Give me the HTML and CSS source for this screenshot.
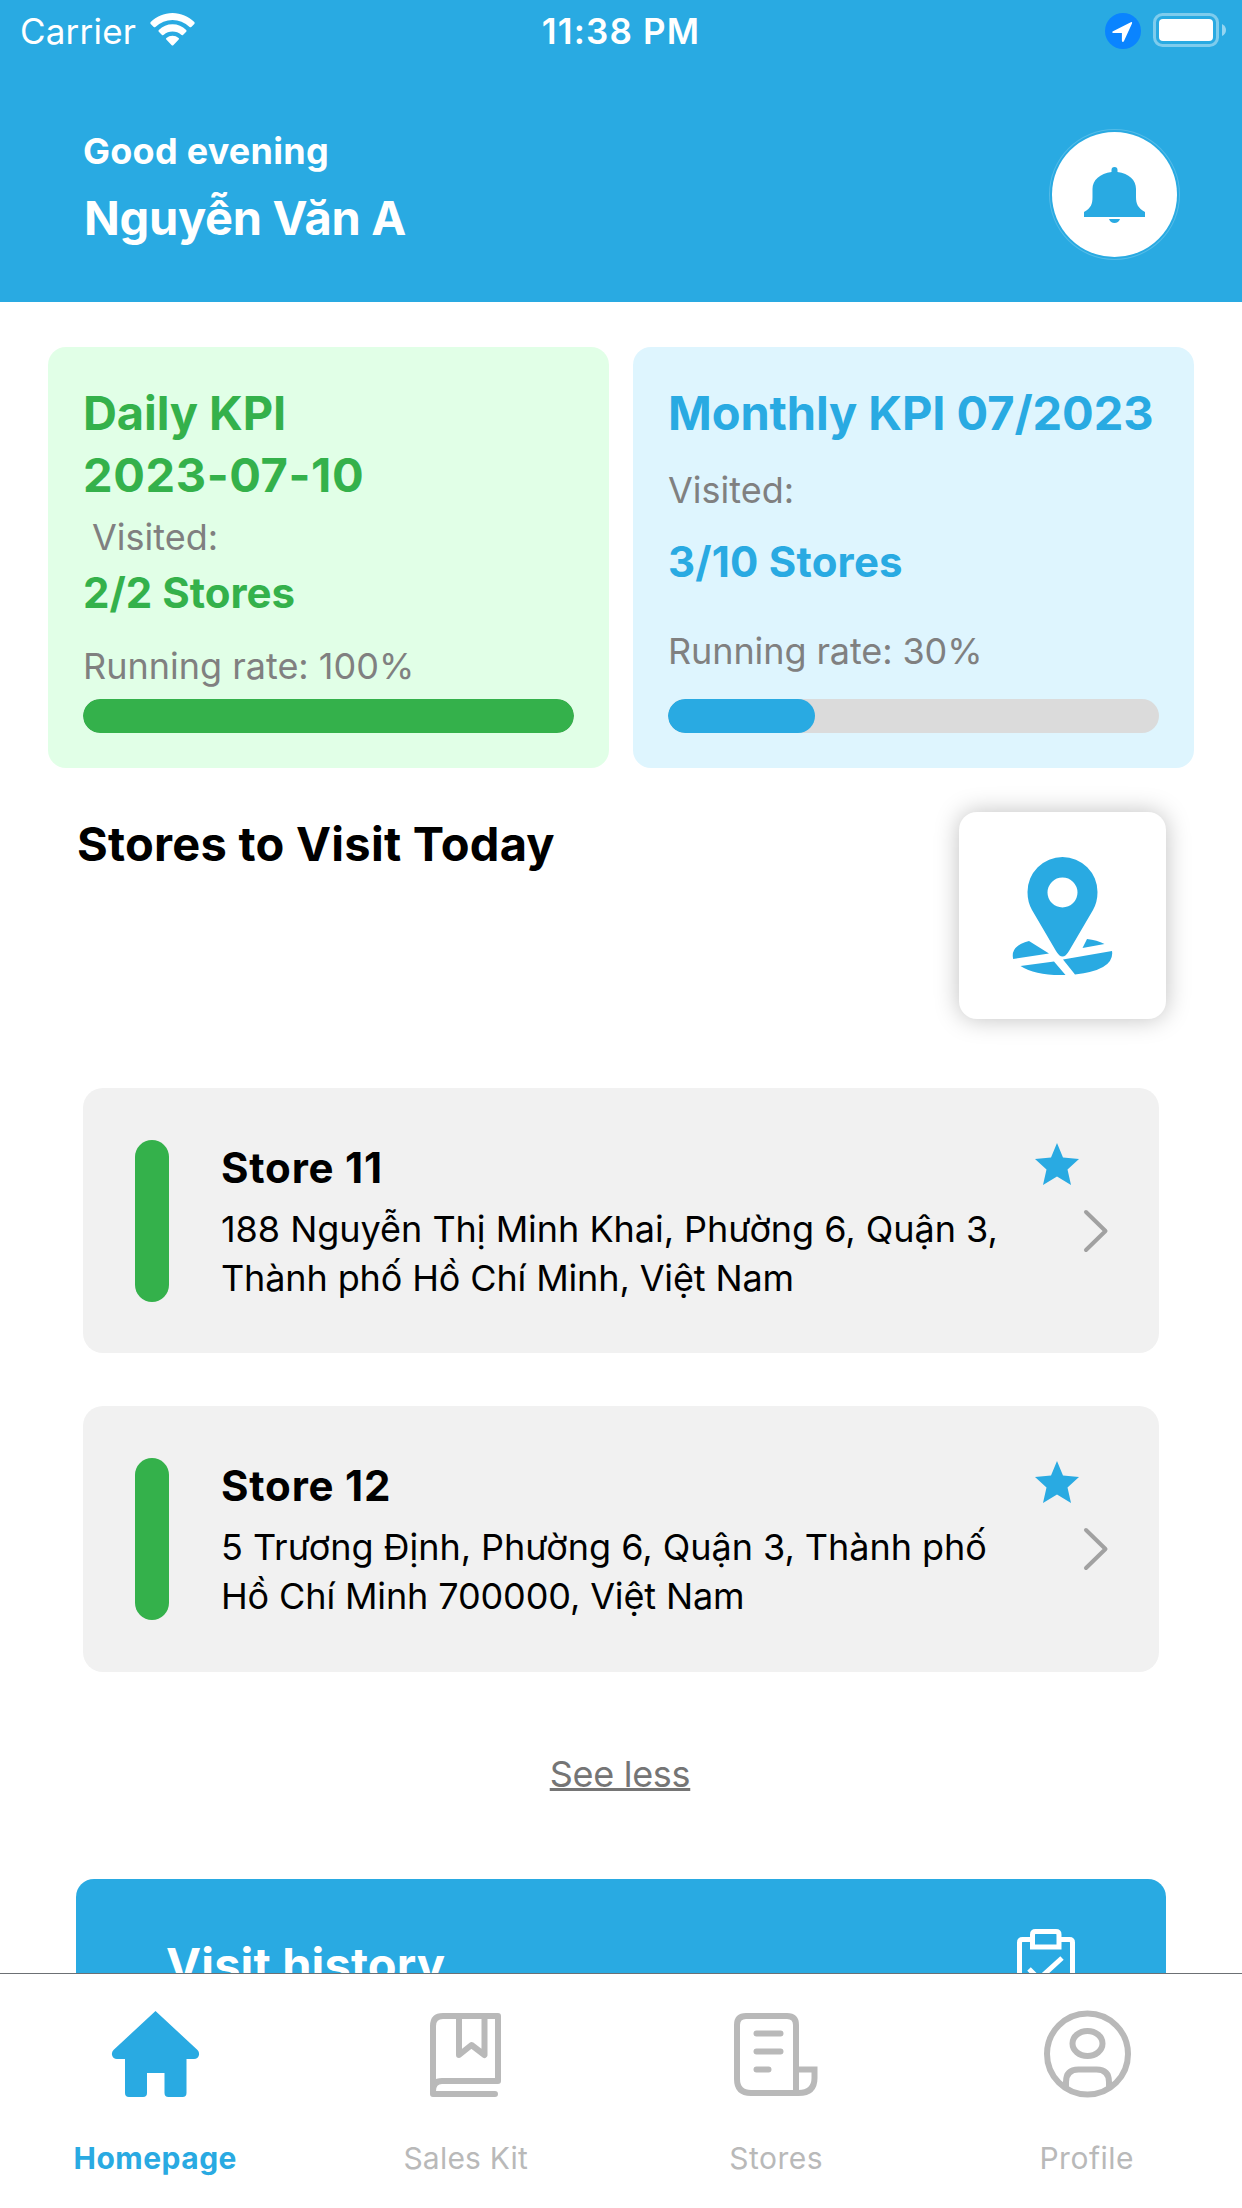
FILE: index.html
```html
<!DOCTYPE html>
<html lang="vi">
<head>
<meta charset="utf-8">
<title>Homepage</title>
<link rel="stylesheet" href="styles.css">
</head>
<body>
<div class="screen">
  <header class="header">
    <div class="status">
      <div class="status-left">
        <span class="carrier">Carrier</span>
        <svg class="wifi" viewBox="0 0 45 33" fill="#fff"><path d="M22.500 0C31 0 38.500 3.500 44.300 9.100Q45.200 10 44.300 11L41.300 14Q40.500 14.700 39.600 14Q32 7 22.500 7Q13 7 5.400 14Q4.500 14.700 3.700 14L.7 11Q-.2 10 .7 9.100C6.500 3.500 14 0 22.500 0Z"/><path d="M22.500 11.200Q30.400 11.200 36.200 17Q37 17.900 36.200 18.800L33 21.900Q32.100 22.600 31.200 21.800Q27.500 18.500 22.500 18.500Q17.500 18.500 13.800 21.800Q12.900 22.600 12 21.900L8.800 18.800Q8 17.900 8.800 17Q14.600 11.200 22.500 11.200Z"/><path d="M22.500 22.800Q26 22.800 28.600 24.900Q29.500 25.700 28.700 26.500L23.300 32.200Q22.500 33 21.700 32.200L16.300 26.500Q15.500 25.700 16.400 24.900Q19 22.800 22.500 22.800Z"/></svg>
      </div>
      <span class="time">11:38 PM</span>
      <div class="status-right">
        <svg class="location" viewBox="0 0 36 36"><circle cx="18" cy="18" r="18" fill="#0a84ff"/><path d="M25.800 9.200Q27.600 8.600 27 10.500L19 28Q18.400 29.200 17.500 28.800Q16.900 28.600 16.900 27.800V20H8.300Q7.300 20 7.200 19.200Q7.100 18.600 8 18.200Z" fill="#fff"/></svg>
        <svg class="battery" viewBox="0 0 73 34"><rect x="1.500" y="1.500" width="63" height="31" rx="8" fill="none" stroke="#fff" stroke-opacity=".4" stroke-width="3"/><rect x="6" y="6" width="54" height="22" rx="4" fill="#fff"/><path d="M69 11Q73 13 73 17T69 23Z" fill="#fff" fill-opacity=".5"/></svg>
      </div>
    </div>
    <div class="greeting-row">
      <div class="greeting">
        <p class="hello">Good evening</p>
        <p class="name">Nguyễn Văn A</p>
      </div>
      <div class="bell-button">
        <svg class="bell" viewBox="0 0 61 56" fill="#29aae2"><path d="M27.500 5V3Q27.500 0 30.500 0T33.500 3V5C45 6.500 52 13 52 22V30C52 37 54 41 61 45V50H0V45C7 41 8.500 37 8.500 30V22C8.500 13 16 6.500 27.500 5Z"/><path d="M25 52H36Q34.500 56 30.500 56T25 52Z"/></svg>
      </div>
    </div>
  </header>

  <main class="content">
    <section class="kpis">
      <article class="kpi kpi-daily">
        <h2 class="kpi-title">Daily KPI<br><span class="date">2023-07-10</span></h2>
        <p class="kpi-label indent">Visited:</p>
        <p class="kpi-value">2/2 Stores</p>
        <p class="kpi-label rate">Running rate: 100%</p>
        <div class="track"><div class="fill" style="width:100%"></div></div>
      </article>
      <article class="kpi kpi-monthly">
        <h2 class="kpi-title">Monthly KPI 07/2023</h2>
        <p class="kpi-label">Visited:</p>
        <p class="kpi-value">3/10 Stores</p>
        <p class="kpi-label rate">Running rate: 30%</p>
        <div class="track"><div class="fill" style="width:30%"></div></div>
      </article>
    </section>

    <section class="visit-head">
      <h2 class="section-title">Stores to Visit Today</h2>
      <div class="map-button">
        <svg class="map" viewBox="0 0 101 119" fill="#29aae2"><path fill-rule="evenodd" d="M50.500 0A35 35 0 0 1 85.500 35Q85.500 45 81 53L57 94Q50.500 105 44 94L20 53Q15.500 45 15.500 35A35 35 0 0 1 50.500 0ZM50.500 20.500A15 15 0 1 0 50.500 50.500A15 15 0 1 0 50.500 20.500Z"/><path d="M17 84L37 96.500L1.200 102Q-2 89 17 84ZM75 82Q85 83 92.500 87L70.500 91ZM51 102.500L100 94Q103 113 63 117.500ZM8.500 109L42 104.500L53.500 118Q24 119 8.500 109Z"/></svg>
      </div>
    </section>

    <section class="stores">
      <article class="store">
        <div class="marker"></div>
        <div class="store-text">
          <h3 class="store-name">Store 11</h3>
          <p class="address">188 Nguyễn Thị Minh Khai, Phường 6, Quận 3,<br><span class="address-city">Thành phố Hồ Chí Minh, Việt Nam</span></p>
        </div>
        <div class="store-icons">
          <svg class="star" viewBox="0 0 44 42" fill="#29aae2"><path d="M22 0L28 14.500L44 16L32.500 26.500L36 42L22 33.500L8 42L11.500 26.500L0 16L16 14.500Z"/></svg>
          <svg class="chevron" viewBox="0 0 24 42"><path d="M2 2L21.500 21L2 40" fill="none" stroke="#a1a1a1" stroke-width="4" stroke-linecap="round" stroke-linejoin="round"/></svg>
        </div>
      </article>
      <article class="store">
        <div class="marker"></div>
        <div class="store-text">
          <h3 class="store-name">Store 12</h3>
          <p class="address">5 Trương Định, Phường 6, Quận 3, Thành phố<br><span class="address-city">Hồ Chí Minh 700000, Việt Nam</span></p>
        </div>
        <div class="store-icons">
          <svg class="star" viewBox="0 0 44 42" fill="#29aae2"><path d="M22 0L28 14.500L44 16L32.500 26.500L36 42L22 33.500L8 42L11.500 26.500L0 16L16 14.500Z"/></svg>
          <svg class="chevron" viewBox="0 0 24 42"><path d="M2 2L21.500 21L2 40" fill="none" stroke="#a1a1a1" stroke-width="4" stroke-linecap="round" stroke-linejoin="round"/></svg>
        </div>
      </article>
    </section>

    <a class="see-less">See less</a>

    <section class="history">
      <h2 class="history-title">Visit history</h2>
      <svg class="clipboard" viewBox="0 0 58 70" fill="none" stroke="#fff" stroke-width="5"><path d="M15.500 10.500H5.500Q2.500 10.500 2.500 13.500V67H55.500V13.500Q55.500 10.500 52.500 10.500H42.500M15.500 18V5.500Q15.500 2.500 18.500 2.500H39Q42 2.500 42 5.500V18Z"/><path d="M12 40L22 50L45 29"/></svg>
    </section>
  </main>

  <nav class="tabs">
    <div class="tab active">
      <svg class="tab-icon" viewBox="0 0 88 88" fill="#29aae2"><path d="M44.500 1L86.500 40Q88.500 42 88 45Q87 49 83 49H75.500V83Q75.500 87 71.500 87H57.500Q53.500 87 53.500 83V63H36V83Q36 87 32 87H18Q14 87 14 83V49H6Q2 49 1 45Q.5 42 2.500 40Z"/></svg>
      <span class="tab-label">Homepage</span>
    </div>
    <div class="tab">
      <svg class="tab-icon" viewBox="0 0 88 88" fill="none" stroke="#b9b9b9" stroke-width="6" stroke-linecap="round" stroke-linejoin="round"><path d="M73 84H11V16Q11 6 21 6H76V71H20Q11 71 11 81M37 6V45L49.500 35L62.500 45V6"/></svg>
      <span class="tab-label sales">Sales Kit</span>
    </div>
    <div class="tab">
      <svg class="tab-icon" viewBox="0 0 88 88" fill="none" stroke="#b9b9b9" stroke-width="6"><path d="M64 83V15Q64 6 55 6H14Q5 6 5 15V69Q5 83 19 83H66.500Q82.500 83 82.500 68V59.500H64"/><path d="M24.500 23.500H48.500M24.500 41.500H48.500M24.500 59.500H36.500" stroke-linecap="round"/></svg>
      <span class="tab-label">Stores</span>
    </div>
    <div class="tab">
      <svg class="tab-icon" viewBox="0 0 88 88" fill="none" stroke="#b9b9b9" stroke-width="6"><circle cx="44.500" cy="44" r="40.500"/><ellipse cx="44.500" cy="33.500" rx="15" ry="12.500"/><path d="M23 78V72Q23 59.500 35.500 59.500H53.500Q66 59.500 66 72V78"/></svg>
      <span class="tab-label">Profile</span>
    </div>
  </nav>
</div>
</body>
</html>
```
FILE: styles.css
```css
* { box-sizing: border-box; }
body, p, h2, h3 { margin: 0; }
body { background: #fff; font-family: Inter, "Liberation Sans", sans-serif; color: #000; }
svg { display: block; flex: none; overflow: visible; }
p, h2, h3, span, a { white-space: nowrap; }
.screen { width: 1242px; height: 2208px; overflow: hidden; display: flex; flex-direction: column; }

.header { height: 302px; flex: none; background: #29aae2; color: #fff; }
.status { height: 62px; display: grid; grid-template-columns: 1fr auto 1fr; align-items: start; }
.status-left { display: flex; padding: 13px 0 0 20px; }
.carrier { width: 130px; font-size: 35px; line-height: 36px; letter-spacing: .2px; }
.wifi { width: 45px; height: 33px; }
.time { font-size: 35px; line-height: 36px; padding-top: 13px; font-weight: 600; letter-spacing: 1.2px; }
.status-right { display: flex; justify-content: flex-end; padding: 13px 16px 0 0; gap: 12px; }
.location { width: 36px; height: 36px; }
.battery { width: 73px; height: 34px; }
.greeting-row { display: flex; justify-content: space-between; padding: 67px 62px 0 83px; }
.hello { font-size: 36px; line-height: 44px; font-weight: 700; letter-spacing: .25px; }
.name { margin-top: 16px; padding-left: 1px; font-size: 47px; line-height: 58px; font-weight: 700; letter-spacing: -.3px; }
.bell-button { width: 131px; height: 131px; border: 1px solid rgba(255,255,255,.2); border-radius: 50%; background: #fff content-box; padding: 2px; display: flex; align-items: center; justify-content: center; }
.bell { width: 61px; height: 56px; }

.content { flex: 1; min-height: 0; overflow: hidden; }
.kpis { display: grid; grid-template-columns: 1fr 1fr; gap: 24px; padding: 45px 48px 0; }
.kpi { height: 421px; border-radius: 18px; padding: 35px; display: flex; flex-direction: column; }
.kpi-daily { background: #e1ffe7; color: #34b14b; }
.kpi-monthly { background: #def5fe; color: #29aae2; }
.kpi-title { font-size: 47px; line-height: 62px; font-weight: 700; letter-spacing: -.1px; }
.date { letter-spacing: .6px; }
.kpi-label { font-size: 36px; line-height: 44px; color: #808080; }
.indent { padding-left: 9px; }
.kpi-value { font-size: 42px; line-height: 50px; font-weight: 700; }
.kpi-daily .kpi-label { margin-top: 9px; }
.kpi-daily .kpi-value { margin-top: 9px; }
.kpi-daily .rate { margin-top: 26px; }
.kpi-monthly .kpi-label { margin-top: 24px; }
.kpi-monthly .kpi-value { margin-top: 25px; letter-spacing: .2px; }
.kpi-monthly .rate { margin-top: 42px; letter-spacing: -.1px; }
.track { height: 34px; flex: none; margin-top: auto; border-radius: 17px; background: #dbdbdb; overflow: hidden; }
.fill { height: 100%; border-radius: 17px; background: currentColor; }

.visit-head { display: flex; justify-content: space-between; align-items: flex-start; padding: 44px 76px 0; }
.section-title { font-size: 47px; line-height: 58px; font-weight: 700; padding: 3px 0 0 1px; letter-spacing: .25px; }
.map-button { width: 207px; height: 207px; border-radius: 18px; background: #fff; box-shadow: 0 0 24px rgba(0,0,0,.25); display: flex; justify-content: center; padding-top: 45px; }
.map { width: 101px; height: 119px; }

.stores { padding: 69px 83px 0; display: flex; flex-direction: column; gap: 53px; }
.store { height: 265px; border-radius: 20px; background: #f1f1f1; padding: 52px; display: flex; }
.store + .store { height: 266px; }
.marker { width: 34px; height: 162px; flex: none; border-radius: 17px; background: #34b14b; }
.store-text { margin-left: 52px; flex: 1; min-width: 0; }
.store-name { font-size: 42px; line-height: 50px; font-weight: 700; padding-top: 3px; letter-spacing: .8px; }
.address { margin-top: 12px; font-size: 36px; line-height: 49px; letter-spacing: -.03px; }
.address-city { letter-spacing: -.13px; }
.store-icons { width: 72px; display: flex; flex-direction: column; padding-top: 3px; flex: none; }
.star { width: 44px; height: 42px; }
.chevron { width: 24px; height: 42px; margin: 25px 0 0 49px; }

.see-less { display: block; width: max-content; margin: 80px auto 0; padding-right: 2px; font-size: 36px; line-height: 44px; letter-spacing: -.3px; color: #757575; text-decoration: underline; text-decoration-thickness: 3px; text-underline-offset: 1px; text-decoration-skip-ink: none; }
.history { height: 210px; margin: 83px 76px 0; border-radius: 18px; background: #29aae2; color: #fff; display: flex; justify-content: space-between; padding: 50px 91px 50px 90px; }
.history-title { font-size: 47px; line-height: 58px; font-weight: 700; padding-top: 7px; letter-spacing: .15px; }
.clipboard { width: 58px; height: 70px; }

.tabs { height: 235px; flex: none; background: #fff; border-top: 1px solid #6c7074; display: grid; grid-template-columns: repeat(4, 1fr); }
.tab { display: flex; flex-direction: column; align-items: center; padding-top: 36px; color: #b9b9b9; }
.tab-icon { width: 88px; height: 88px; }
.tab-label { margin-top: 38px; font-size: 30px; line-height: 44px; letter-spacing: .5px; }
.active { color: #29aae2; font-weight: 700; }
.sales { letter-spacing: .2px; }
```
